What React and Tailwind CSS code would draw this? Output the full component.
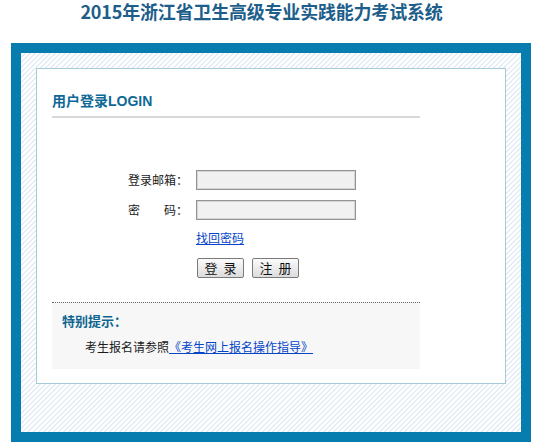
import React from "react";

const cjk = "font-['Noto_Sans_CJK_SC',sans-serif]";

export default function App() {
  return (
    <div className={`w-[541px] h-[442px] overflow-hidden bg-white ${cjk}`}>
      <div className="h-[43px] flex justify-center pr-[18px] pt-[1px]">
        <h1 className="text-[18px] leading-[20px] font-bold text-[#1d5e8a] tracking-[-0.2px]">
          2015年浙江省卫生高级专业实践能力考试系统
        </h1>
      </div>
      <div className="ml-[11px] w-[520px] border-[10px] border-[#077daf]">
        <div className="px-[15px] pt-[15px] pb-[48px] bg-[repeating-linear-gradient(135deg,#ffffff_0px,#ffffff_2.2px,#e4edf6_2.2px,#e4edf6_3.6px)]">
          <div className="w-[470px] h-[316px] border border-[#a6cbd8] bg-white px-[15px]">
            <div className="mt-[22px] w-[368px] pb-[5px] border-b-2 border-[#d9d9d9]">
              <h2 className="text-[14px] leading-[20px] font-bold text-[#0e6896] font-['Liberation_Sans','Noto_Sans_CJK_SC',sans-serif]">
                用户登录LOGIN
              </h2>
            </div>

            <div className="mt-[52px] pl-[76px] text-[12px] text-[#1a1a1a]">
              <div className="flex items-center h-[20px]">
                <span className="w-[68px] leading-[16px]">登录邮箱：</span>
                <div className="w-[160px] h-[20px] border border-[#939393] bg-[#f1f1f1] shadow-[inset_0_0_0_1px_#d6d6d6]" />
              </div>
              <div className="flex items-center h-[20px] mt-[10px]">
                <span className="w-[68px] leading-[16px] whitespace-pre">密　　码：</span>
                <div className="w-[160px] h-[20px] border border-[#939393] bg-[#f1f1f1] shadow-[inset_0_0_0_1px_#d6d6d6]" />
              </div>
              <div className="mt-[10px] pl-[68px] leading-[16px]">
                <span className="text-[#0645c8] underline">找回密码</span>
              </div>
              <div className="mt-[12px] pl-[69px] flex gap-[8px]">
                <div className="w-[47px] h-[20px] rounded-[2px] border border-[#7a7a7a] bg-[linear-gradient(#fbfbfb,#dcdcdc)] flex items-center justify-center gap-[6px] text-[13px] leading-[16px] text-[#111]">
                  <span>登</span>
                  <span>录</span>
                </div>
                <div className="w-[47px] h-[20px] rounded-[2px] border border-[#7a7a7a] bg-[linear-gradient(#fbfbfb,#dcdcdc)] flex items-center justify-center gap-[6px] text-[13px] leading-[16px] text-[#111]">
                  <span>注</span>
                  <span>册</span>
                </div>
              </div>
            </div>

            <div className="mt-[24px] w-[368px] border-t border-dotted border-[#666] bg-[#f7f7f7] pt-[9px] pb-[14px]">
              <div className="pl-[10px] text-[13px] leading-[18px] font-bold text-[#0e6690]">
                特别提示：
              </div>
              <div className="mt-[9px] pl-[33px] text-[12px] leading-[16px] text-[#1a1a1a]">
                考生报名请参照
                <span className="text-[#0645c8] underline">《考生网上报名操作指导》</span>
              </div>
            </div>
          </div>
        </div>
      </div>
    </div>
  );
}
